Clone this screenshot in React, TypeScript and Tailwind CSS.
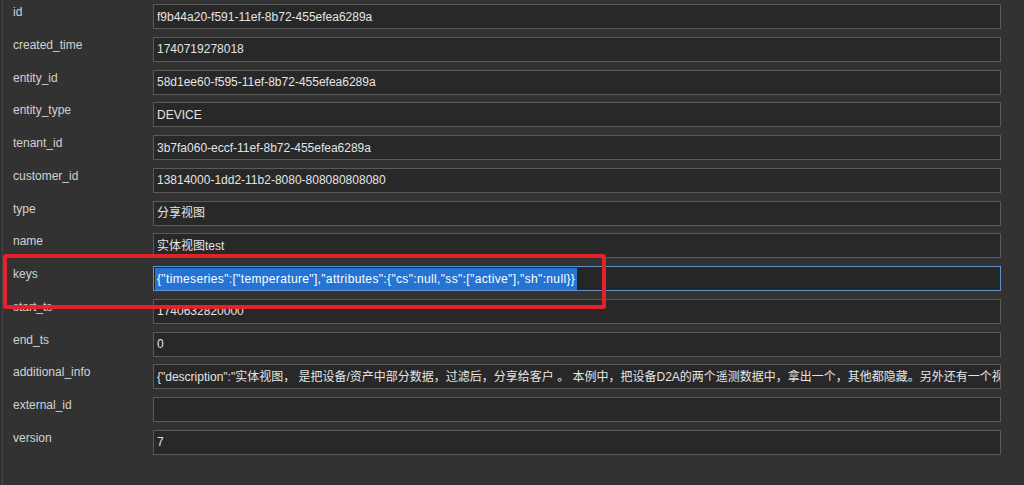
const rows: { label: string; value: string }[] = [
  { label: "id", value: "f9b44a20-f591-11ef-8b72-455efea6289a" },
  { label: "created_time", value: "1740719278018" },
  { label: "entity_id", value: "58d1ee60-f595-11ef-8b72-455efea6289a" },
  { label: "entity_type", value: "DEVICE" },
  { label: "tenant_id", value: "3b7fa060-eccf-11ef-8b72-455efea6289a" },
  { label: "customer_id", value: "13814000-1dd2-11b2-8080-808080808080" },
  { label: "type", value: "分享视图" },
  { label: "name", value: "实体视图test" },
  { label: "keys", value: '{"timeseries":["temperature"],"attributes":{"cs":null,"ss":["active"],"sh":null}}' },
  { label: "start_ts", value: "1740632820000" },
  { label: "end_ts", value: "0" },
  {
    label: "additional_info",
    value:
      '{"description":"实体视图， 是把设备/资产中部分数据，过滤后，分享给客户 。 本例中，把设备D2A的两个遥测数据中，拿出一个，其他都隐藏。另外还有一个视',
  },
  { label: "external_id", value: "" },
  { label: "version", value: "7" },
];

export default function App() {
  return (
    <div
      className="relative h-[485px] w-[1024px] overflow-hidden bg-[#323232] text-[12px]"
      style={{ fontFamily: '"Liberation Sans", "Noto Sans CJK SC", sans-serif' }}
    >
      <div className="ml-[2px] flex h-full border-l-[1px] border-[#464646]">
        <div className="flex w-full flex-col gap-[7.75px] pt-[4px]">
          {rows.map((r) => {
            const active = r.label === "keys";
            return (
              <div key={r.label} className="flex h-[25px]">
                <div className="w-[150px] pl-[10px] leading-[16px] text-[#d2d2d2]">{r.label}</div>
                <div
                  className={
                    "flex h-[25px] w-[848px] items-center overflow-hidden whitespace-nowrap border pl-[1px] " +
                    (active ? "border-[#5f93c8] bg-[#262626]" : "border-[#5a5a5a] bg-[#282828]")
                  }
                >
                  {active ? (
                    <span className="bg-[#2574d4] px-[2px] leading-[22px] tracking-[0.35px] text-white">{r.value}</span>
                  ) : (
                    <span className="px-[2px] text-[#e4e4e4]">{r.value}</span>
                  )}
                </div>
              </div>
            );
          })}
        </div>
      </div>
      <div className="pointer-events-none absolute left-[3px] top-[254px] h-[55px] w-[603px] rounded-[3px] border-[4px] border-[#e5222b]" />
    </div>
  );
}
